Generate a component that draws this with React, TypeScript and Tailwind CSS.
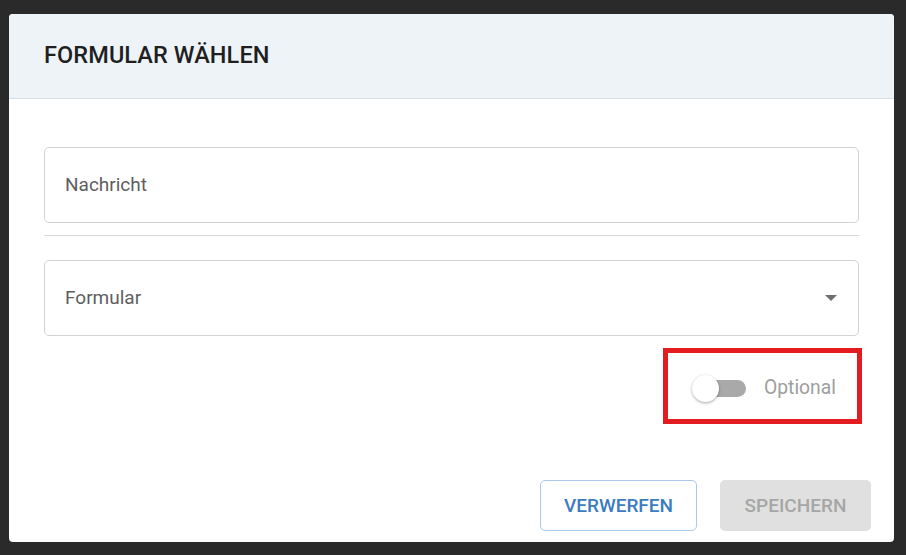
import React from "react";

export default function App() {
  return (
    <div className="w-[906px] h-[555px] bg-[#2a2a2a] pt-[14px] pl-[9px] font-['Roboto',sans-serif] overflow-hidden">
      <div className="w-[885px] h-[528px] bg-white rounded-[4px] overflow-hidden flex flex-col">
        <div className="h-[85px] shrink-0 bg-[#eef3f8] border-b border-[#d6dee6] flex items-center pl-[35px]">
          <h1 className="text-[23.5px] font-medium text-[#1f1f1f] tracking-[0.1px]">FORMULAR WÄHLEN</h1>
        </div>
        <div className="flex-1 flex flex-col px-[35px] pt-[48px]">
          <div className="h-[76px] border border-[#d2d2d2] rounded-[5px] flex items-center pl-[20px]">
            <span className="text-[19px] text-[#5e5e5e]">Nachricht</span>
          </div>
          <div className="mt-[12px] h-px bg-[#d9d9d9]" />
          <div className="mt-[24px] h-[76px] border border-[#d2d2d2] rounded-[5px] flex items-center justify-between pl-[20px] pr-[21px]">
            <span className="text-[19px] text-[#5e5e5e]">Formular</span>
            <svg width="12" height="6" viewBox="0 0 12 6">
              <path d="M0 0 L12 0 L6 6 Z" fill="#6f6f6f" />
            </svg>
          </div>
          <div className="mt-[12px] flex justify-end -mr-[3px]">
            <div className="w-[199px] h-[76px] border-[5px] border-[#e21c1f] flex items-center pl-[24px] pt-[4px]">
              <div className="relative w-[56px] h-[30px] flex items-center">
                <div className="absolute left-[7px] w-[47px] h-[17px] rounded-full bg-[#a9a9a9]" />
                <div className="absolute left-0 w-[27px] h-[27px] rounded-full bg-white shadow-[0_1px_3px_rgba(0,0,0,0.35)]" />
              </div>
              <span className="ml-[16px] text-[19.3px] text-[#9e9e9e]">Optional</span>
            </div>
          </div>
          <div className="mt-auto mb-[11px] flex justify-end gap-[23px] -mr-[12px]">
            <button className="w-[157px] h-[51px] border border-[#a9c9ea] rounded-[5px] text-[19px] font-medium text-[#3b7dc0] bg-white pt-[1px]">
              VERWERFEN
            </button>
            <button className="w-[151px] h-[51px] rounded-[5px] bg-[#e0e0e0] text-[19px] font-medium text-[#a6a6a6] pt-[1px]">
              SPEICHERN
            </button>
          </div>
        </div>
      </div>
    </div>
  );
}
